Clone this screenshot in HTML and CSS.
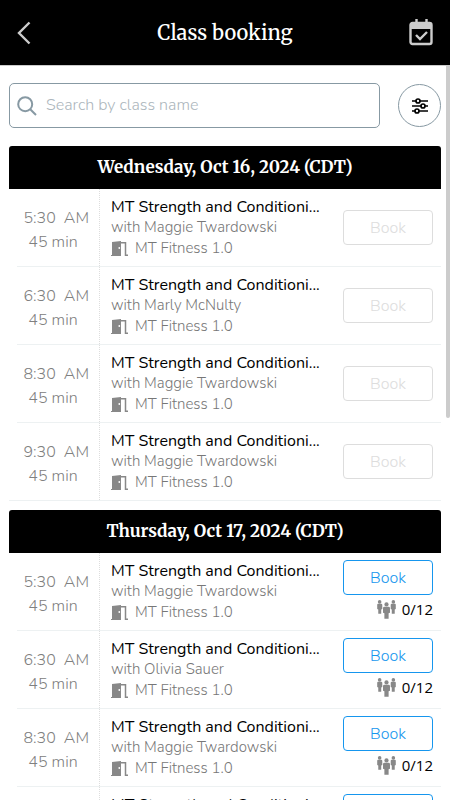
FILE: index.html
```
<!DOCTYPE html>
<html lang="en">
<head>
<meta charset="utf-8">
<meta name="viewport" content="width=device-width, initial-scale=1">
<title>Class booking</title>
<link rel="stylesheet" href="styles.css">
</head>
<body>
<svg class="sprite" aria-hidden="true">
  <symbol id="door" viewBox="0 0 17 16">
    <path fill="currentColor" fill-rule="evenodd" d="M1 1 L10 0 V15 H0 V14 H1 Z M7.400 7 a.9.9 0 1 0 1.800 0 a.9.9 0 1 0 -1.800 0 Z"/>
    <path fill="none" stroke="currentColor" stroke-width="1.500" d="M10 1.700 H14.500 V14.300 H17"/>
  </symbol>
  <symbol id="people" viewBox="0 0 18 18">
    <g fill="currentColor">
      <circle cx="2.500" cy="1.800" r="1.700"/>
      <path d="M1 3.500 H4 Q5 3.500 5 4.500 V8.500 L4 9 V13 H1.200 V9 L.2 8.500 V4.500 Q.2 3.500 1 3.500Z"/>
      <circle cx="15.500" cy="1.800" r="1.700"/>
      <path d="M14 3.500 H17 Q17.800 3.500 17.800 4.500 V8.500 L16.800 9 V13 H14 V9 L13 8.500 V4.500 Q13 3.500 14 3.500Z"/>
      <circle cx="9" cy="4.200" r="2"/>
      <path d="M7 6.500 H11 Q12.300 6.500 12.300 7.800 V12 L11 12.500 V17.800 H7 V12.500 L5.700 12 V7.800 Q5.700 6.500 7 6.500Z"/>
    </g>
  </symbol>
</svg>
<div class="app">
  <header class="topbar">
    <button class="icon-button" type="button" aria-label="Back">
      <svg width="14" height="24" viewBox="0 0 14 24"><path d="M12.500 1.500 L2 12 L12.500 22.500" fill="none" stroke="#ccc" stroke-width="2.400"/></svg>
    </button>
    <h1>Class booking</h1>
    <button class="icon-button icon-button-end" type="button" aria-label="My bookings">
      <svg width="24" height="28" viewBox="0 0 24 28"><path d="M7.500 0 V6 M17.500 0 V6" stroke="#ccc" stroke-width="2.400"/><rect x="1.500" y="4" width="21" height="21" rx="2" fill="none" stroke="#ccc" stroke-width="2.400"/><path d="M1 4 H23 V10 H1Z" fill="#ccc"/><path d="M7 16 L11 20 L18 13" fill="none" stroke="#ccc" stroke-width="2.400"/></svg>
    </button>
  </header>
  <main class="content">
    <form class="search-row">
      <label class="search">
        <svg width="20" height="20" viewBox="0 0 20 20" fill="none" stroke="#8799a3" stroke-width="2"><circle cx="8.200" cy="8.200" r="7"/><path d="M13.200 13.200 L19 19"/></svg>
        <input type="search" placeholder="Search by class name" aria-label="Search by class name">
      </label>
      <button class="filter" type="button" aria-label="Filters">
        <svg width="18" height="16" viewBox="0 0 18 16" stroke="#000" stroke-width="1.700" fill="#fff"><path d="M1 3 H17 M1 8 H17 M1 13 H17"/><circle cx="7" cy="3" r="2"/><circle cx="12" cy="8" r="2"/><circle cx="6" cy="13" r="2"/></svg>
      </button>
    </form>

    <section class="day">
      <h2>Wednesday, Oct 16, 2024 (CDT)</h2>
      <ul>
        <li class="slot">
          <div class="time"><span>5:30&nbsp; AM</span><span>45 min</span></div>
          <div class="info"><h3>MT Strength and Conditioni...</h3><p>with Maggie Twardowski</p><p class="place"><svg><use href="#door"/></svg>MT Fitness 1.0</p></div>
          <div class="action"><button class="book" type="button" disabled>Book</button></div>
        </li>
        <li class="slot">
          <div class="time"><span>6:30&nbsp; AM</span><span>45 min</span></div>
          <div class="info"><h3>MT Strength and Conditioni...</h3><p>with Marly McNulty</p><p class="place"><svg><use href="#door"/></svg>MT Fitness 1.0</p></div>
          <div class="action"><button class="book" type="button" disabled>Book</button></div>
        </li>
        <li class="slot">
          <div class="time"><span>8:30&nbsp; AM</span><span>45 min</span></div>
          <div class="info"><h3>MT Strength and Conditioni...</h3><p>with Maggie Twardowski</p><p class="place"><svg><use href="#door"/></svg>MT Fitness 1.0</p></div>
          <div class="action"><button class="book" type="button" disabled>Book</button></div>
        </li>
        <li class="slot">
          <div class="time"><span>9:30&nbsp; AM</span><span>45 min</span></div>
          <div class="info"><h3>MT Strength and Conditioni...</h3><p>with Maggie Twardowski</p><p class="place"><svg><use href="#door"/></svg>MT Fitness 1.0</p></div>
          <div class="action"><button class="book" type="button" disabled>Book</button></div>
        </li>
      </ul>
    </section>

    <section class="day">
      <h2>Thursday, Oct 17, 2024 (CDT)</h2>
      <ul>
        <li class="slot">
          <div class="time"><span>5:30&nbsp; AM</span><span>45 min</span></div>
          <div class="info"><h3>MT Strength and Conditioni...</h3><p>with Maggie Twardowski</p><p class="place"><svg><use href="#door"/></svg>MT Fitness 1.0</p></div>
          <div class="action"><button class="book" type="button">Book</button><span class="count"><svg><use href="#people"/></svg>0/12</span></div>
        </li>
        <li class="slot">
          <div class="time"><span>6:30&nbsp; AM</span><span>45 min</span></div>
          <div class="info"><h3>MT Strength and Conditioni...</h3><p>with Olivia Sauer</p><p class="place"><svg><use href="#door"/></svg>MT Fitness 1.0</p></div>
          <div class="action"><button class="book" type="button">Book</button><span class="count"><svg><use href="#people"/></svg>0/12</span></div>
        </li>
        <li class="slot">
          <div class="time"><span>8:30&nbsp; AM</span><span>45 min</span></div>
          <div class="info"><h3>MT Strength and Conditioni...</h3><p>with Maggie Twardowski</p><p class="place"><svg><use href="#door"/></svg>MT Fitness 1.0</p></div>
          <div class="action"><button class="book" type="button">Book</button><span class="count"><svg><use href="#people"/></svg>0/12</span></div>
        </li>
        <li class="slot">
          <div class="time"></div>
          <div class="info"><h3>MT Strength and Conditioni...</h3></div>
          <div class="action"><button class="book" type="button" aria-label="Book"></button></div>
        </li>
      </ul>
    </section>
    <div class="scroll-thumb"></div>
  </main>
</div>
</body>
</html>
```
FILE: styles.css
```
* { box-sizing: border-box; }

body {
  margin: 0;
  background: #fff;
  color: #000;
  font: 350 16px/20px Nunito, Lato, sans-serif;
}

h1, h2, h3, p, ul { margin: 0; padding: 0; }
button, input { font: inherit; }
.sprite { display: none; }

.app {
  display: flex;
  flex-direction: column;
  height: 100vh;
  overflow: hidden;
}

.topbar {
  flex: none;
  display: grid;
  grid-template-columns: 48px 1fr 48px;
  align-items: center;
  height: 66px;
  padding: 0 9px;
  background: #000;
  border-bottom: 1px solid #ccc;
}

.topbar h1 {
  color: #fff;
  font: 500 20px/28px Merriweather, "Noto Serif", "DejaVu Serif", serif;
  text-align: center;
}

.icon-button {
  display: flex;
  padding: 8px;
  border: 0;
  background: none;
}

.icon-button-end { justify-content: flex-end; }

.content {
  position: relative;
  flex: 1;
  min-height: 0;
  padding: 17px 9px 0;
  overflow: hidden;
}

.scroll-thumb {
  position: absolute;
  top: 0;
  right: 0;
  width: 4px;
  height: 48%;
  background: #ccc;
  border-radius: 0 0 2px 2px;
}

.search-row {
  display: flex;
  align-items: center;
  gap: 18px;
  margin-bottom: 18px;
}

.search {
  flex: 1;
  display: flex;
  align-items: center;
  gap: 9px;
  height: 45px;
  padding: 0 7px;
  border: 1px solid #8799a3;
  border-radius: 5px;
}

.search input {
  flex: 1;
  min-width: 0;
  padding: 0 0 2px;
  border: 0;
  outline: 0;
  background: none;
  font-weight: 300;
}

.search input::placeholder { color: #acb6bc; }

.filter {
  display: grid;
  place-items: center;
  width: 43px;
  height: 43px;
  padding: 0;
  border: 1px solid #8799a3;
  border-radius: 50%;
  background: #fff;
}

.day { margin-bottom: 9px; }

.day h2 {
  height: 43px;
  border-radius: 3px 3px 0 0;
  background: #000;
  color: #fff;
  font: 700 17px/43px Merriweather, "Noto Serif", "DejaVu Serif", serif;
  text-align: center;
}

.day ul { list-style: none; }

.slot {
  display: flex;
  height: 78px;
  margin-left: 8px;
  border-bottom: 1px solid #edf1f2;
}

.slot:last-child {
  margin-left: 0;
  padding-left: 8px;
}

.time {
  flex: none;
  display: flex;
  flex-direction: column;
  width: 83px;
  padding: 17px 10px 0 0;
  border-right: 1px dotted #ddd;
  color: #808080;
  line-height: 24px;
  text-align: center;
}

.time span:first-child { text-align: right; }

.info {
  flex: 1;
  min-width: 0;
  padding: 8px 0 0 11px;
  white-space: nowrap;
}

.info h3 { font-size: 16px; font-weight: 400; }
.info p { color: #777; font-size: 15px; font-weight: 300; line-height: 21px; }

.place {
  display: flex;
  align-items: center;
  gap: 7px;
}

.place svg { width: 17px; height: 16px; color: #888; }

.action {
  flex: none;
  display: flex;
  flex-direction: column;
  align-items: flex-end;
  gap: 4px;
  padding: 7px 8px 0 0;
}

.book {
  width: 90px;
  height: 35px;
  padding: 0;
  border: 1px solid #1696ee;
  border-radius: 4px;
  background: #fff;
  color: #1696ee;
}

.book:disabled {
  margin-top: 14px;
  border-color: #ddd;
  color: #ddd;
}

.count {
  display: flex;
  align-items: center;
  gap: 6px;
  font: 15px/20px "Open Sans", "Noto Sans", sans-serif;
}

.count svg { width: 19px; height: 19px; color: #888; }
```
